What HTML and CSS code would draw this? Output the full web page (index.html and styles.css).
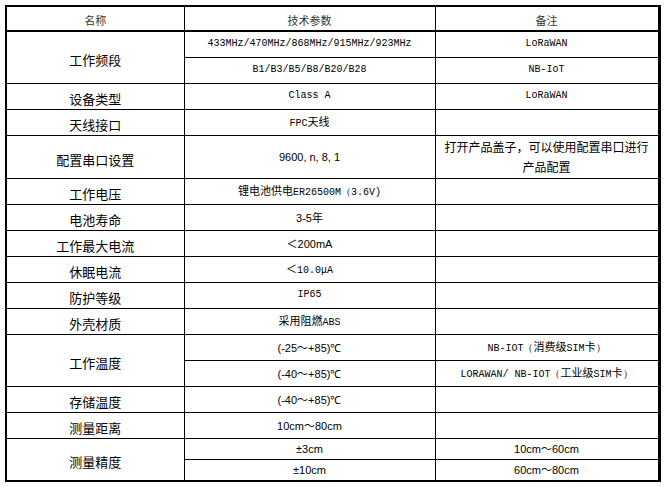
FILE: index.html
```html
<!DOCTYPE html>
<html lang="zh">
<head>
<meta charset="utf-8">
<title>技术参数</title>
<link rel="stylesheet" href="styles.css">
</head>
<body>
<table class="spec">
  <colgroup>
    <col class="c1"><col class="c2"><col class="c3">
  </colgroup>
  <thead>
    <tr class="h"><th>名称</th><th>技术参数</th><th>备注</th></tr>
  </thead>
  <tbody>
    <tr class="r26"><td class="name" rowspan="2">工作频段</td><td class="mono">433MHz/470MHz/868MHz/915MHz/923MHz</td><td class="mono">LoRaWAN</td></tr>
    <tr class="r26"><td class="mono">B1/B3/B5/B8/B20/B28</td><td class="mono">NB-IoT</td></tr>
    <tr class="r26"><td class="name">设备类型</td><td class="mono">Class A</td><td class="mono">LoRaWAN</td></tr>
    <tr class="r26"><td class="name">天线接口</td><td class="mono">FPC<span class="cn">天线</span></td><td></td></tr>
    <tr class="r43"><td class="name">配置串口设置</td><td class="sans">9600, n, 8, 1</td><td class="cn note">打开产品盖子，可以使用配置串口进行<br>产品配置</td></tr>
    <tr class="r26"><td class="name">工作电压</td><td class="mono"><span class="cn">锂电池供电</span>ER26500M（3.6V)</td><td></td></tr>
    <tr class="r26"><td class="name">电池寿命</td><td class="sans">3-5<span class="cn">年</span></td><td></td></tr>
    <tr class="r26"><td class="name">工作最大电流</td><td class="sans"><span class="cn">＜</span>200mA</td><td></td></tr>
    <tr class="r26"><td class="name">休眠电流</td><td class="mono"><span class="cn">＜</span>10.0μA</td><td></td></tr>
    <tr class="r26"><td class="name">防护等级</td><td class="mono">IP65</td><td></td></tr>
    <tr class="r26"><td class="name">外壳材质</td><td class="mono"><span class="cn">采用阻燃</span>ABS</td><td></td></tr>
    <tr class="r26"><td class="name" rowspan="2">工作温度</td><td class="sans">(-25<span class="cn">～</span>+85)℃</td><td class="mono">NB-IOT（<span class="cn">消费级</span>SIM<span class="cn">卡</span>）</td></tr>
    <tr class="r26"><td class="sans">(-40<span class="cn">～</span>+85)℃</td><td class="mono">LORAWAN/ NB-IOT（<span class="cn">工业级</span>SIM<span class="cn">卡</span>）</td></tr>
    <tr class="r26"><td class="name">存储温度</td><td class="sans">(-40<span class="cn">～</span>+85)℃</td><td></td></tr>
    <tr class="r26"><td class="name">测量距离</td><td class="sans">10cm<span class="cn">～</span>80cm</td><td></td></tr>
    <tr class="r21"><td class="name" rowspan="2">测量精度</td><td class="sans">±3cm</td><td class="sans">10cm<span class="cn">～</span>60cm</td></tr>
    <tr class="r22"><td class="sans">±10cm</td><td class="sans">60cm<span class="cn">～</span>80cm</td></tr>
  </tbody>
</table>
</body>
</html>
```
FILE: styles.css
```css
html, body {
  margin: 0;
  padding: 0;
  background: #fff;
}
body {
  padding: 5px 0 0 5px;
  font-family: "Noto Sans CJK SC", sans-serif;
  color: #000;
}
.spec {
  border-collapse: collapse;
  table-layout: fixed;
  width: 654px;
  border: 2px solid #000;
  border-right-width: 3px;
}
.c1 { width: 178px; }
.c2 { width: 251px; }
.c3 { width: 224px; }
.spec th,
.spec td {
  border: 1px solid #000;
  padding: 0;
  text-align: center;
  vertical-align: middle;
  line-height: 14px;
}
.spec th {
  font-weight: normal;
  font-size: 11px;
  color: #333;
  padding-top: 2px;
  border-bottom: 2px solid #000;
}
.h { height: 25px; }
.r26 { height: 26px; }
.r43 { height: 43px; }
.r21 { height: 21px; }
.r22 { height: 22px; }
.spec .name {
  font-size: 13px;
  padding-top: 6px;
}
.mono {
  font-family: "Liberation Mono", monospace;
  font-size: 10px;
}
.sans {
  font-family: "Liberation Sans", sans-serif;
  font-size: 11px;
}
.cn {
  font-family: "Noto Sans CJK SC", sans-serif;
  font-size: 12px;
}
.mono .cn { font-size: 11px; }
.sans .cn { font-size: 11px; }
.spec .note {
  font-size: 12px;
  line-height: 20px;
  padding-top: 1px;
}
```
